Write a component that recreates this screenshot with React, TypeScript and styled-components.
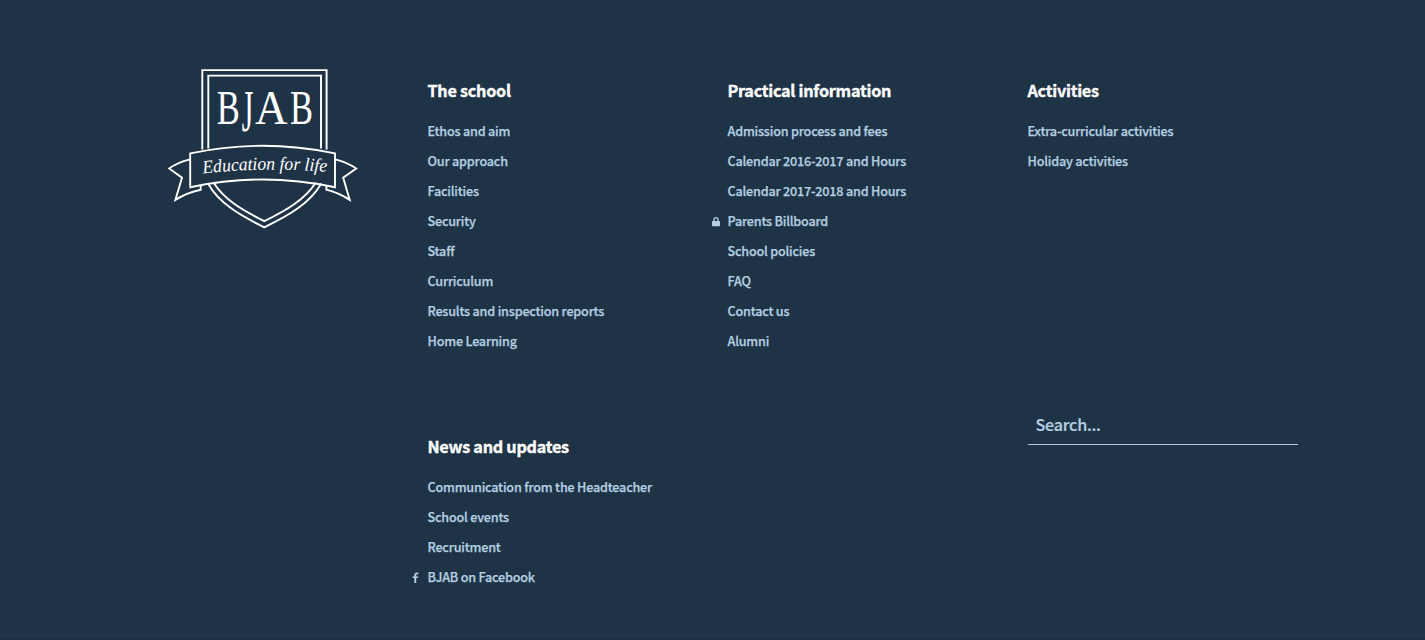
import React from "react";
import styled, { createGlobalStyle } from "styled-components";

const GlobalStyle = createGlobalStyle`
  body {
    margin: 0;
    background: #1f3347;
    font-family: "Noto Sans CJK SC", "Noto Sans", sans-serif;
  }
`;

const Footer = styled.footer`
  box-sizing: border-box;
  height: 640px;
  padding-top: 68px;
  background: #1f3347;
  border-bottom: 1px solid #1c2b3f;
`;

const Container = styled.div`
  width: 1170px;
  margin: 0 auto;
  display: grid;
  grid-template-columns: repeat(4, 270px);
  column-gap: 30px;
  grid-template-rows: 356px auto;
`;

const Brand = styled.a`
  display: flex;
  justify-content: center;
  align-items: flex-start;
`;

const Column = styled.nav<{ $start?: number }>`
  grid-column-start: ${(p) => p.$start ?? "auto"};
  padding-top: 7px;
`;

const Heading = styled.h4`
  margin: 0 0 11px;
  font-size: 16.2px;
  line-height: 30px;
  font-weight: 700;
  letter-spacing: -0.26px;
  color: #fff;
  -webkit-text-stroke: 0.35px #fff;
  white-space: nowrap;
`;

const Links = styled.ul`
  list-style: none;
  margin: 0;
  padding: 0;
`;

const Item = styled.li`
  position: relative;
  height: 30px;
`;

const Link = styled.a`
  display: block;
  font-size: 12.6px;
  line-height: 30px;
  font-weight: 500;
  letter-spacing: -0.19px;
  color: #b3cfe0;
  -webkit-text-stroke: 0.25px #b3cfe0;
  white-space: nowrap;
`;

const Marker = styled.svg`
  position: absolute;
  left: -17px;
  top: 9.5px;
  width: 10px;
  height: 12px;
  fill: #b3cfe0;
`;

const Search = styled.form`
  grid-column-start: 4;
`;

const SearchInput = styled.input`
  box-sizing: border-box;
  display: block;
  width: 270px;
  height: 41px;
  margin: -20px 0 0;
  padding: 0 8px;
  border: 0;
  border-bottom: 1px solid #b9cbd8;
  background: transparent;
  outline: none;
  font: 500 16.2px "Noto Sans CJK SC", "Noto Sans", sans-serif;
  letter-spacing: -0.25px;
  color: #b3cfe0;
  &::placeholder {
    color: #b3cfe0;
    opacity: 1;
    -webkit-text-stroke: 0.2px #b3cfe0;
  }
`;

type IconName = "lock" | "facebook";
type Entry = { label: string; icon?: IconName };

const school: Entry[] = [
  { label: "Ethos and aim" },
  { label: "Our approach" },
  { label: "Facilities" },
  { label: "Security" },
  { label: "Staff" },
  { label: "Curriculum" },
  { label: "Results and inspection reports" },
  { label: "Home Learning" },
];

const practical: Entry[] = [
  { label: "Admission process and fees" },
  { label: "Calendar 2016-2017 and Hours" },
  { label: "Calendar 2017-2018 and Hours" },
  { label: "Parents Billboard", icon: "lock" },
  { label: "School policies" },
  { label: "FAQ" },
  { label: "Contact us" },
  { label: "Alumni" },
];

const activities: Entry[] = [
  { label: "Extra-curricular activities" },
  { label: "Holiday activities" },
];

const news: Entry[] = [
  { label: "Communication from the Headteacher" },
  { label: "School events" },
  { label: "Recruitment" },
  { label: "BJAB on Facebook", icon: "facebook" },
];

const Icon = ({ name }: { name: IconName }) => (
  <Marker viewBox="0 0 10 12">
    {name === "lock" ? (
      <path
        fillRule="evenodd"
        d="M2.3 5V3.6a2.7 2.7 0 0 1 5.4 0V5h.5q.8 0 .8.8v3.6q0 .8-.8.8H1.8q-.8 0-.8-.8V5.8q0-.8.8-.8ZM3.7 5h2.6V3.6a1.3 1.3 0 0 0-2.6 0Z"
      />
    ) : (
      <path d="M7.3 .6v1.6H6.2c-.8 0-1 .4-1 1v1.200h2l-.3 1.700H5.200v4.800H3.300V6.100H1.700V4.400h1.600V3C3.300 1.400 4.200.5 5.800.5c.7 0 1.300 0 1.500.1Z" />
    )}
  </Marker>
);

const LinkColumn = ({ title, entries, start }: { title: string; entries: Entry[]; start?: number }) => (
  <Column $start={start}>
    <Heading>{title}</Heading>
    <Links>
      {entries.map((e) => (
        <Item key={e.label}>
          {e.icon && <Icon name={e.icon} />}
          <Link>{e.label}</Link>
        </Item>
      ))}
    </Links>
  </Column>
);

const Crest = () => (
  <svg width="190" height="161" viewBox="168 68 190 161" fill="none" stroke="#fff" strokeWidth="1.9">
    <path d="M202.300 149.500V70.100H326.600V149.500M208.300 148.500V75.600H321V148.500" />
    <path d="M190.200 153.400Q262.500 138.200 335 153.400V187.200Q262.500 171.800 190.200 187.200Z" />
    <path d="M190 159.300Q177 162.500 169.200 168.500L182 177.700L175.400 199.900Q187 192.500 200.700 189.700V185.200" />
    <path d="M335.200 159.300Q348 162.500 356.200 168.500L343.200 177.700L349.700 199.900Q338 192.500 326.400 189.700V185.200" />
    <path d="M208 183.500C219 203 239 215 264.300 227.300C290 215 310 203 321.300 183.500" />
    <path d="M213.500 182.500C224 199.500 242 210 264.300 221.200C287 210 305 199.500 315.800 182.500" />
    <g fill="#fff" stroke="none" fontFamily="Liberation Serif, serif" fontSize="48">
      <text transform="translate(216.700 123.500) scale(.72 1)">B</text>
      <text transform="translate(241.700 131) scale(.62 1.230)">J</text>
      <text transform="translate(255 123.500) scale(.94 1)">A</text>
      <text transform="translate(290 123.500) scale(.72 1)">B</text>
    </g>
    <path id="motto" d="M203 173.600Q264.500 166.500 331 172.300" stroke="none" />
    <text fill="#fff" stroke="none" fontFamily="Liberation Serif, serif" fontStyle="italic" fontSize="18.500">
      <textPath href="#motto" textLength="124" lengthAdjust="spacingAndGlyphs">Education for life</textPath>
    </text>
  </svg>
);

export default function App() {
  return (
    <>
      <GlobalStyle />
      <Footer>
        <Container>
          <Brand>
            <Crest />
          </Brand>
          <LinkColumn title="The school" entries={school} />
          <LinkColumn title="Practical information" entries={practical} />
          <LinkColumn title="Activities" entries={activities} />
          <LinkColumn title="News and updates" entries={news} start={2} />
          <Search>
            <SearchInput placeholder="Search..." />
          </Search>
        </Container>
      </Footer>
    </>
  );
}
